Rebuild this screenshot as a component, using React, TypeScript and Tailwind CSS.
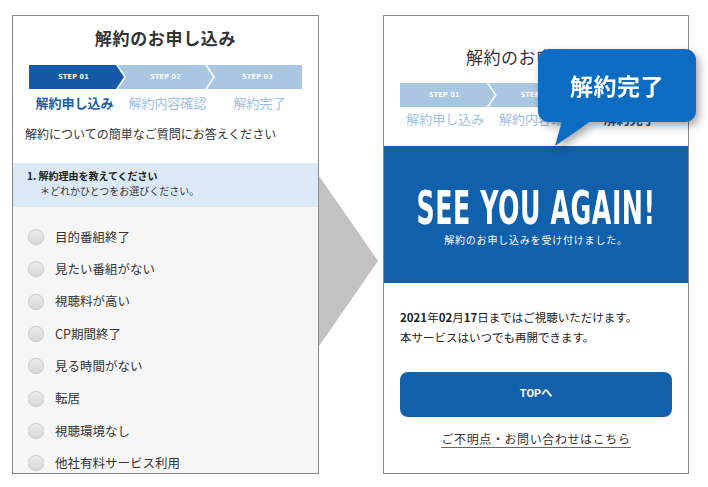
import React from "react";

const jp = "font-['Noto_Sans_CJK_JP','Noto_Sans',sans-serif]";
const cond = "font-['DejaVu_Sans_Condensed','DejaVu_Sans',sans-serif]";

const reasons = [
  "目的番組終了",
  "見たい番組がない",
  "視聴料が高い",
  "CP期間終了",
  "見る時間がない",
  "転居",
  "視聴環境なし",
  "他社有料サービス利用",
];

function StepBar({ active }: { active: boolean }) {
  // active = first step dark, others light; otherwise all light
  return (
    <div className="flex h-[24px]">
      <div
        className={`flex-1 flex items-center justify-center ${active ? "bg-[#1359a6]" : "bg-[#a9c6e3]"} [clip-path:polygon(0_0,calc(100%_-_8px)_0,100%_50%,calc(100%_-_8px)_100%,0_100%)]`}
      >
        <span className={`${cond} text-[7px] font-bold text-white tracking-[0.04em] pr-[6px]`}>STEP 01</span>
      </div>
      <div className="flex-1 -ml-[6px] flex items-center justify-center bg-[#a9c6e3] [clip-path:polygon(0_0,calc(100%_-_8px)_0,100%_50%,calc(100%_-_8px)_100%,0_100%,8px_50%)]">
        <span className={`${cond} text-[7px] font-bold text-white tracking-[0.04em]`}>STEP 02</span>
      </div>
      <div className="flex-1 -ml-[6px] flex items-center justify-center bg-[#a9c6e3] [clip-path:polygon(0_0,100%_0,100%_100%,0_100%,8px_50%)]">
        <span className={`${cond} text-[7px] font-bold text-white tracking-[0.04em] pl-[6px]`}>STEP 03</span>
      </div>
    </div>
  );
}

function LeftPanel() {
  return (
    <div className={`w-[307px] h-[459px] border border-[#8a8a8a] bg-white overflow-hidden flex flex-col ${jp}`}>
      <div className="shrink-0 pt-[10px] text-center text-[17px] leading-[24px] font-bold text-[#333] tracking-[0.04em]">
        解約のお申し込み
      </div>
      <div className="shrink-0 px-[16px] mt-[15px]">
        <StepBar active />
        <div className="grid grid-cols-3 mt-[5px] text-[13px] leading-[18px] text-center">
          <span className="font-bold text-[#1a5ea8]">解約申し込み</span>
          <span className="text-[#9dbfe1] pl-[4px]">解約内容確認</span>
          <span className="text-[#9dbfe1] pl-[6px]">解約完了</span>
        </div>
      </div>
      <div className="shrink-0 mt-[13px] pl-[12px] text-[12px] leading-[18px] text-[#333]">
        解約についての簡単なご質問にお答えください
      </div>
      <div className="shrink-0 mt-[20px] h-[44px] bg-[#dbe9f7] pt-[5px] pl-[14px] text-[10px] leading-[15px] text-[#222]">
        <div className="font-bold">1. 解約理由を教えてください</div>
        <div className="pl-[13px] text-[#333]">＊どれかひとつをお選びください。</div>
      </div>
      <div className="shrink-0 grow bg-[#f6f6f6] pt-[14px]">
        {reasons.map((r) => (
          <div key={r} className="h-[32.3px] flex items-center pl-[15px]">
            <span className="w-[16px] h-[16px] rounded-full bg-[linear-gradient(180deg,#ececec,#d6d6d6)] shadow-[inset_0_0_0_1px_#d0d0d0]" />
            <span className="ml-[11px] text-[12.5px] text-[#333]">{r}</span>
          </div>
        ))}
      </div>
    </div>
  );
}

function RightPanel() {
  return (
    <div className={`w-[306px] h-[459px] border border-[#8a8a8a] bg-white overflow-hidden flex flex-col ${jp}`}>
      <div className="shrink-0 pt-[29px] text-center text-[17px] leading-[24px] text-[#333] tracking-[0.03em]">
        解約のお申し込み
      </div>
      <div className="shrink-0 px-[16px] mt-[14px]">
        <StepBar active={false} />
        <div className="grid grid-cols-3 mt-[3px] text-[13px] leading-[18px] text-center">
          <span className="text-[#9dbfe1]">解約申し込み</span>
          <span className="text-[#9dbfe1] pl-[4px]">解約内容確認</span>
          <span className="font-bold text-[#1a4f8a] pl-[6px]">解約完了</span>
        </div>
      </div>
      <div className="shrink-0 mt-[18px] h-[137px] bg-[#1160ac] flex flex-col items-center pt-[39px]">
        <div className="h-[46px] flex items-center justify-center">
          <span className={`${cond} inline-block text-[46px] leading-[46px] font-bold text-white scale-x-[0.61] whitespace-nowrap tracking-[0.02em]`}>
            SEE YOU AGAIN!
          </span>
        </div>
        <div className="mt-[2px] text-[10px] leading-[14px] text-white tracking-[0.08em]">
          解約のお申し込みを受け付けました。
        </div>
      </div>
      <div className="shrink-0 px-[16px]">
        <div className="mt-[24px] text-[11.5px] leading-[20px] text-[#222]">
          <div>
            <b>2021</b>年<b>02</b>月<b>17</b>日まではご視聴いただけます。
          </div>
          <div>本サービスはいつでも再開できます。</div>
        </div>
        <button className="mt-[25px] w-full h-[45px] rounded-[8px] bg-[#1160ac] text-white text-[11px] font-bold font-['Roboto','Noto_Sans_CJK_JP',sans-serif]">
          TOPへ
        </button>
        <div className="mt-[14px] flex justify-center">
          <span className="text-[12px] leading-[16px] tracking-[0.05em] text-[#333] border-b-[1.5px] border-[#666]">
            ご不明点・お問い合わせはこちら
          </span>
        </div>
      </div>
    </div>
  );
}

function Bubble() {
  return (
    <div className="absolute left-[538px] top-[49px] w-[158px] h-[98px] [filter:drop-shadow(3px_4px_4px_rgba(0,0,0,0.35))]">
      <div className={`h-[73px] rounded-[11px] bg-[#0b6cc1] flex items-center justify-center ${jp}`}>
        <span className="text-[23px] font-bold text-white tracking-[0.02em]">解約完了</span>
      </div>
      <svg width="40" height="26" viewBox="0 0 40 26" className="absolute left-[15px] top-[72px]">
        <polygon points="9,0 38,0 2,25" fill="#0b6cc1" />
      </svg>
    </div>
  );
}

export default function App() {
  return (
    <div className="relative w-[708px] h-[487px] bg-white">
      <div className="flex pt-[15px] pl-[12px]">
        <LeftPanel />
        <div className="w-[64px] pt-[161px]">
          <svg width="60" height="170" viewBox="0 0 60 170">
            <polygon points="0,0 59,85 0,170" fill="#c2c2c2" />
          </svg>
        </div>
        <RightPanel />
      </div>
      <Bubble />
    </div>
  );
}
